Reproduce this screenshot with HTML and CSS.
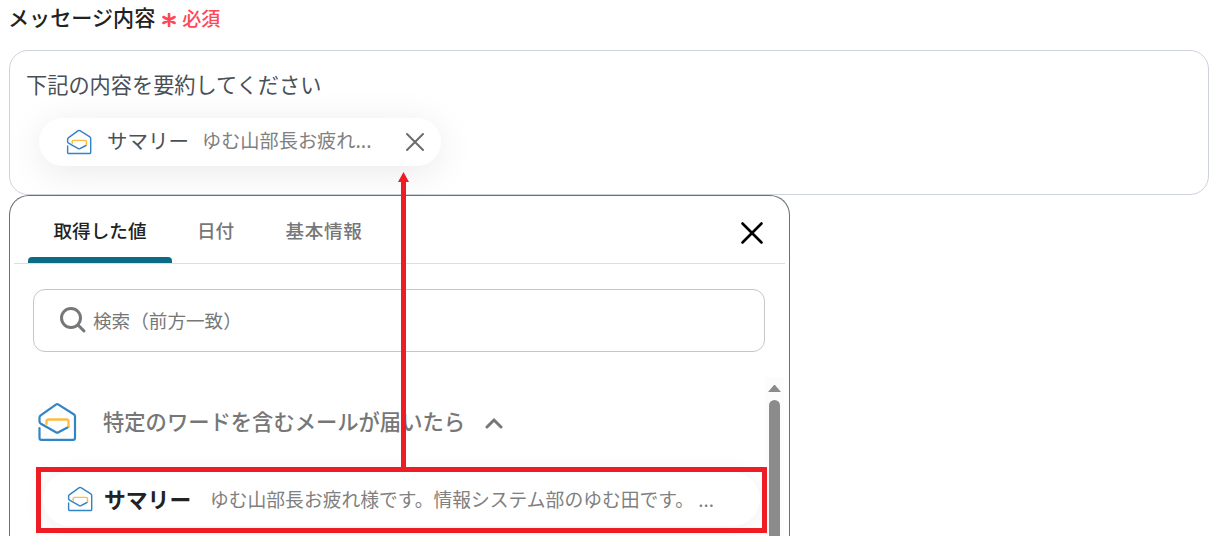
FILE: index.html
```html
<!DOCTYPE html>
<html lang="ja">
<head>
  <meta charset="UTF-8">
  <title>メッセージ内容</title>
  <link rel="stylesheet" href="styles.css">
</head>
<body>

<svg class="defs" width="0" height="0">
  <symbol id="mail" viewBox="0 0 40 40">
    <path d="M2.5 26V36q0 1.8 1.8 1.8h31.9q1.8 0 1.8-1.800V14.500q0-1.500-1.300-2.300L21.500 2.600q-1.300-.9-2.600 0L4 13.200Q2.500 14.300 2.500 15.500V19.500q0 1.400 1.400 2.200L18.900 30.200q1.300.8 2.600 0L31.400 25" fill="none" stroke="#3384c6" stroke-width="2.2" stroke-linecap="round"/>
    <path d="M9.500 22V19.500q0-2 2-2h18q2 0 2 2v5" fill="none" stroke="#fdbb42" stroke-width="2.3" stroke-linecap="round"/>
  </symbol>
</svg>

<div class="label">
  <span>メッセージ内容</span>
  <svg class="star" width="14" height="14" viewBox="0 0 14 14"><path d="M7 1v12M1.4 4l11.2 6M1.4 10l11.2-6"/></svg>
  <span class="required">必須</span>
</div>

<div class="message-box">
  <p class="message">下記の内容を要約してください</p>
  <div class="tag">
    <svg class="icon-small"><use href="#mail"/></svg>
    <span class="tag-name">サマリー</span>
    <span class="tag-value">ゆむ山部長お疲れ...</span>
    <svg class="tag-close" width="20" height="20" viewBox="0 0 20 20"><path d="M2 2l16 16M18 2L2 18"/></svg>
  </div>
</div>

<div class="panel">
  <div class="tabs">
    <div class="tab active">取得した値</div>
    <div class="tab">日付</div>
    <div class="tab last">基本情報</div>
    <svg class="panel-close" width="24" height="24" viewBox="0 0 24 24"><path d="M2.5 2.5l19 19M21.5 2.5l-19 19"/></svg>
  </div>
  <div class="search">
    <svg class="search-icon" width="28" height="28" viewBox="0 0 28 28"><circle cx="12" cy="12" r="9.5"/><path d="M19 19l6 6"/></svg>
    <span>検索（前方一致）</span>
  </div>
  <div class="list">
    <div class="items">
      <div class="group">
        <svg class="icon-large"><use href="#mail"/></svg>
        <span class="group-name">特定のワードを含むメールが届いたら</span>
        <svg class="chevron" width="18" height="12" viewBox="0 0 18 12"><path d="M2 10l7-7 7 7"/></svg>
      </div>
      <div class="item">
        <svg class="icon-small"><use href="#mail"/></svg>
        <span class="item-name">サマリー</span>
        <span class="item-value">ゆむ山部長お疲れ様です。情報システム部のゆむ田です。 ...</span>
      </div>
    </div>
    <div class="scrollbar">
      <div class="scroll-up"></div>
      <div class="scroll-thumb"></div>
    </div>
  </div>
</div>

<!-- red frame and arrow over the panel -->
<div class="frame"></div>
<svg class="arrow" width="12" height="297" viewBox="0 0 12 297"><path d="M5.5 0L11 10H8v287H3V10H0z"/></svg>

</body>
</html>
```

FILE: styles.css
```css
* {
  box-sizing: border-box;
}
body {
  margin: 0;
  height: 536px;
  position: relative;
  overflow: hidden;
  background: #fff;
  color: #222;
  font-family: "Noto Sans CJK JP", sans-serif;
}
svg {
  flex-shrink: 0;
  fill: none;
  stroke-linecap: round;
}
.defs {
  position: absolute;
}
.label {
  display: flex;
  align-items: center;
  height: 50px;
  padding: 0 0 16px 8px;
  font-size: 21.1px;
  font-weight: 500;
}
.star {
  margin: 6px 6px 0 7px;
  stroke: #ff4757;
  stroke-width: 2.6;
}
.required {
  font-size: 19px;
  padding-top: 1px;
  color: #ff4757;
}
.message-box {
  width: 1200px;
  height: 145px;
  margin-left: 9px;
  padding: 17px 16px 0;
  border: 1px solid #ced2da;
  border-radius: 19px;
  overflow: hidden;
}
.message {
  margin: 0;
  font-size: 21.2px;
  line-height: 32px;
  color: #495057;
}
.tag {
  display: flex;
  align-items: center;
  width: 402px;
  height: 48px;
  margin: 18px 0 0 13px;
  padding-left: 27px;
  border-radius: 24px;
  background: #fff;
  box-shadow: 0 6px 38px rgba(0, 0, 0, 0.09);
  white-space: nowrap;
}
.icon-small {
  width: 26px;
  height: 26px;
}
.tag-name {
  width: 95px;
  margin-left: 15px;
  padding-bottom: 4px;
  font-size: 20.5px;
  color: #495057;
}
.tag-value {
  width: 203px;
  padding-bottom: 4px;
  font-size: 19.2px;
  color: #808080;
}
.tag-close {
  stroke: #6c6c6c;
  stroke-width: 2;
}
.panel {
  width: 781px;
  height: 341px;
  margin-left: 9px;
  padding: 0 4px;
  border: 1px solid #6c6f74;
  border-bottom: none;
  border-radius: 20px 20px 0 0;
  background: #fff;
}
.tabs {
  display: flex;
  height: 68px;
  padding-left: 14px;
  border-bottom: 1px solid #dedede;
}
.tab {
  width: 87px;
  height: 67px;
  padding-top: 18px;
  font-size: 18.6px;
  line-height: 31px;
  font-weight: 500;
  text-align: center;
  color: #777;
}
.tab.active {
  position: relative;
  width: 144px;
  color: #222;
}
.tab.active::after {
  content: "";
  position: absolute;
  left: 0;
  bottom: 0;
  width: 100%;
  height: 6px;
  border-radius: 4px 4px 0 0;
  background: #0b6b85;
}
.tab.last {
  width: 130px;
  letter-spacing: 0.6px;
}
.panel-close {
  margin: 25px 0 0 351px;
  stroke: #000;
  stroke-width: 2.6;
}
.search {
  display: flex;
  align-items: center;
  width: 732px;
  height: 63px;
  margin: 25px 0 0 19px;
  padding: 0 0 2px 25px;
  border: 1px solid #c6c6c6;
  border-radius: 12px;
  font-size: 18.6px;
  color: #777;
}
.search-icon {
  margin-right: 6px;
  stroke: #777;
  stroke-width: 3;
}
.list {
  display: flex;
  margin-top: 25px;
}
.items {
  width: 751px;
  height: 159px;
  padding: 24px 0 0 23px;
  overflow: hidden;
}
.group {
  display: flex;
  align-items: center;
  height: 42px;
  font-size: 21.3px;
  font-weight: 500;
  color: #777;
}
.group-name {
  padding-bottom: 4px;
}
.icon-large {
  width: 40px;
  height: 40px;
  margin-right: 26px;
}
.chevron {
  margin: 2px 0 0 20px;
  stroke: #777;
  stroke-width: 3;
}
.item {
  display: flex;
  align-items: center;
  width: 717px;
  height: 54px;
  margin: 29px 0 0 6px;
  padding-left: 24px;
  border-radius: 27px;
  box-shadow: 0 2px 24px rgba(0, 0, 0, 0.07);
  white-space: nowrap;
}
.item-name {
  width: 106px;
  margin-left: 11px;
  padding-bottom: 2px;
  font-size: 21.8px;
  font-weight: 700;
}
.item-value {
  padding-bottom: 2px;
  font-size: 18.8px;
  color: #808080;
}
.scrollbar {
  width: 19px;
  height: 159px;
  padding: 8px 4px 0;
  background: #fcfcfc;
}
.scroll-up {
  margin-left: -1px;
  width: 13px;
  border-left: 6.5px solid transparent;
  border-right: 6.5px solid transparent;
  border-bottom: 7px solid #8b8b8b;
}
.scroll-thumb {
  width: 11px;
  height: 136px;
  margin-top: 8px;
  border-radius: 6px 6px 0 0;
  background: #8b8b8b;
}
.frame {
  position: absolute;
  left: 36px;
  top: 467px;
  width: 731px;
  height: 66px;
  border: 5px solid #ee1c25;
}
.arrow {
  position: absolute;
  left: 398px;
  top: 172px;
  fill: #ee1c25;
}
```
